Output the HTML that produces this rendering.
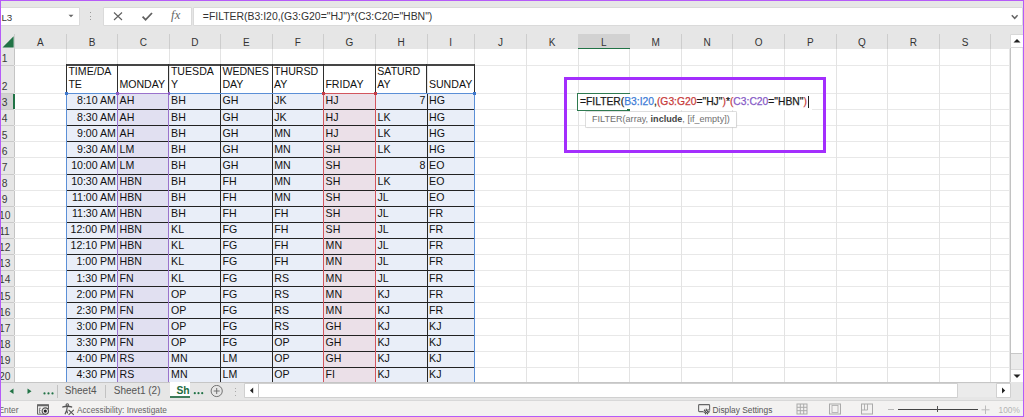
<!DOCTYPE html>
<html><head><meta charset="utf-8">
<style>
html,body{margin:0;padding:0}
body{width:1024px;height:417px;position:relative;overflow:hidden;background:#e6e6e6;font-family:"Liberation Sans",sans-serif;}
.a{position:absolute}
.t{position:absolute;white-space:nowrap;line-height:1}
</style></head><body>
<div class="a" style="left:1px;top:7.5px;width:77.5px;height:17.6px;background:#fff;box-shadow:0 0 0 0.6px #d2d2d2"></div>
<div class="t" style="left:1.4px;top:12.9px;font-size:9.8px;color:#3a3a3a">L3</div>
<svg class="a" style="left:68px;top:14px" width="6" height="4"><path d="M0.5 0.8 L5.5 0.8 L3 3.3 Z" fill="#666"/></svg>
<div class="a" style="left:90px;top:12px;width:1.2px;height:1.2px;background:#9a9a9a"></div>
<div class="a" style="left:90px;top:15.5px;width:1.2px;height:1.2px;background:#9a9a9a"></div>
<div class="a" style="left:90px;top:19px;width:1.2px;height:1.2px;background:#9a9a9a"></div>
<div class="a" style="left:103.6px;top:7.6px;width:87.5px;height:17.8px;background:#fff;box-shadow:0 0 0 0.6px #d2d2d2"></div>
<svg class="a" style="left:110px;top:9px" width="80" height="15"><path d="M4 3.5 L12 11 M12 3.5 L4 11" stroke="#606060" stroke-width="1.15" fill="none"/><path d="M32.6 7.6 L35.6 10.8 L42 4" stroke="#606060" stroke-width="1.8" fill="none"/></svg>
<div class="t" style="left:171px;top:9.4px;font-family:'Liberation Serif',serif;font-size:12.6px;color:#666;letter-spacing:0.3px"><i>fx</i></div>
<div class="a" style="left:193.6px;top:7.6px;width:828px;height:17.8px;background:#fff;box-shadow:0 0 0 0.6px #d2d2d2"></div>
<div class="t" style="left:202.8px;top:12.0px;font-size:10.45px;color:#333">=FILTER(B3:I20,(G3:G20="HJ")*(C3:C20="HBN")</div>
<svg class="a" style="left:1010px;top:14px" width="10" height="6"><path d="M1.8 1.3 L4.7 4.3 L7.6 1.3" stroke="#666" stroke-width="1.5" fill="none"/></svg>
<div class="a" style="left:14.3px;top:48.9px;width:995.2px;height:1.2px;background:#cccccc"></div>
<div class="a" style="left:13.8px;top:34px;width:0.8px;height:15px;background:#cdcdcd"></div>
<div class="a" style="left:66.0px;top:34px;width:0.8px;height:15px;background:#cdcdcd"></div>
<div class="a" style="left:117.0px;top:34px;width:0.8px;height:15px;background:#cdcdcd"></div>
<div class="a" style="left:168.5px;top:34px;width:0.8px;height:15px;background:#cdcdcd"></div>
<div class="a" style="left:220.0px;top:34px;width:0.8px;height:15px;background:#cdcdcd"></div>
<div class="a" style="left:271.7px;top:34px;width:0.8px;height:15px;background:#cdcdcd"></div>
<div class="a" style="left:323.0px;top:34px;width:0.8px;height:15px;background:#cdcdcd"></div>
<div class="a" style="left:374.9px;top:34px;width:0.8px;height:15px;background:#cdcdcd"></div>
<div class="a" style="left:426.5px;top:34px;width:0.8px;height:15px;background:#cdcdcd"></div>
<div class="a" style="left:474.0px;top:34px;width:0.8px;height:15px;background:#cdcdcd"></div>
<div class="a" style="left:525.8px;top:34px;width:0.8px;height:15px;background:#cdcdcd"></div>
<div class="a" style="left:577.5px;top:34px;width:0.8px;height:15px;background:#cdcdcd"></div>
<div class="a" style="left:629.3px;top:34px;width:0.8px;height:15px;background:#cdcdcd"></div>
<div class="a" style="left:680.8px;top:34px;width:0.8px;height:15px;background:#cdcdcd"></div>
<div class="a" style="left:732.2px;top:34px;width:0.8px;height:15px;background:#cdcdcd"></div>
<div class="a" style="left:783.9px;top:34px;width:0.8px;height:15px;background:#cdcdcd"></div>
<div class="a" style="left:835.8px;top:34px;width:0.8px;height:15px;background:#cdcdcd"></div>
<div class="a" style="left:887.0px;top:34px;width:0.8px;height:15px;background:#cdcdcd"></div>
<div class="a" style="left:938.9px;top:34px;width:0.8px;height:15px;background:#cdcdcd"></div>
<div class="a" style="left:990.2px;top:34px;width:0.8px;height:15px;background:#cdcdcd"></div>
<div class="a" style="left:578px;top:34px;width:51.799999999999955px;height:14.2px;background:#d2d2d2"></div>
<div class="a" style="left:578px;top:48px;width:51.799999999999955px;height:1.6px;background:#217346"></div>
<div class="t" style="left:14.3px;top:37.9px;width:52.2px;text-align:center;font-size:10px;color:#333">A</div>
<div class="t" style="left:66.5px;top:37.9px;width:51.0px;text-align:center;font-size:10px;color:#333">B</div>
<div class="t" style="left:117.5px;top:37.9px;width:51.5px;text-align:center;font-size:10px;color:#333">C</div>
<div class="t" style="left:169px;top:37.9px;width:51.5px;text-align:center;font-size:10px;color:#333">D</div>
<div class="t" style="left:220.5px;top:37.9px;width:51.69999999999999px;text-align:center;font-size:10px;color:#333">E</div>
<div class="t" style="left:272.2px;top:37.9px;width:51.30000000000001px;text-align:center;font-size:10px;color:#333">F</div>
<div class="t" style="left:323.5px;top:37.9px;width:51.89999999999998px;text-align:center;font-size:10px;color:#333">G</div>
<div class="t" style="left:375.4px;top:37.9px;width:51.60000000000002px;text-align:center;font-size:10px;color:#333">H</div>
<div class="t" style="left:427px;top:37.9px;width:47.5px;text-align:center;font-size:10px;color:#333">I</div>
<div class="t" style="left:474.5px;top:37.9px;width:51.799999999999955px;text-align:center;font-size:10px;color:#333">J</div>
<div class="t" style="left:526.3px;top:37.9px;width:51.700000000000045px;text-align:center;font-size:10px;color:#333">K</div>
<div class="t" style="left:578px;top:37.9px;width:51.799999999999955px;text-align:center;font-size:10px;color:#333">L</div>
<div class="t" style="left:629.8px;top:37.9px;width:51.5px;text-align:center;font-size:10px;color:#333">M</div>
<div class="t" style="left:681.3px;top:37.9px;width:51.40000000000009px;text-align:center;font-size:10px;color:#333">N</div>
<div class="t" style="left:732.7px;top:37.9px;width:51.69999999999993px;text-align:center;font-size:10px;color:#333">O</div>
<div class="t" style="left:784.4px;top:37.9px;width:51.89999999999998px;text-align:center;font-size:10px;color:#333">P</div>
<div class="t" style="left:836.3px;top:37.9px;width:51.200000000000045px;text-align:center;font-size:10px;color:#333">Q</div>
<div class="t" style="left:887.5px;top:37.9px;width:51.89999999999998px;text-align:center;font-size:10px;color:#333">R</div>
<div class="t" style="left:939.4px;top:37.9px;width:51.30000000000007px;text-align:center;font-size:10px;color:#333">S</div>
<svg class="a" style="left:1px;top:34px" width="14" height="15"><path d="M1.5 13.5 L12.6 2.2 L12.6 13.5 Z" fill="#217346"/></svg>
<div class="a" style="left:14.3px;top:49.4px;width:995.2px;height:332.20000000000005px;background:#fff"></div>
<div class="a" style="left:1px;top:49.4px;width:13.3px;height:332.20000000000005px;background:#e6e6e6"></div>
<div class="a" style="left:14px;top:49.4px;width:0.9px;height:332.20000000000005px;background:#c4c4c4"></div>
<div class="a" style="left:1px;top:93.5px;width:12.5px;height:16.099999999999994px;background:#d2d2d2"></div>
<div class="a" style="left:13px;top:93.5px;width:1.6px;height:16.099999999999994px;background:#217346"></div>
<div class="a" style="left:14.3px;top:64.5px;width:995.2px;height:0.9px;background:#e8e8e8"></div>
<div class="a" style="left:1px;top:64.5px;width:13px;height:0.9px;background:#cacaca"></div>
<div class="a" style="left:14.3px;top:93.0px;width:995.2px;height:0.9px;background:#e8e8e8"></div>
<div class="a" style="left:1px;top:93.0px;width:13px;height:0.9px;background:#cacaca"></div>
<div class="a" style="left:14.3px;top:109.1px;width:995.2px;height:0.9px;background:#e8e8e8"></div>
<div class="a" style="left:1px;top:109.1px;width:13px;height:0.9px;background:#cacaca"></div>
<div class="a" style="left:14.3px;top:125.2px;width:995.2px;height:0.9px;background:#e8e8e8"></div>
<div class="a" style="left:1px;top:125.2px;width:13px;height:0.9px;background:#cacaca"></div>
<div class="a" style="left:14.3px;top:141.3px;width:995.2px;height:0.9px;background:#e8e8e8"></div>
<div class="a" style="left:1px;top:141.3px;width:13px;height:0.9px;background:#cacaca"></div>
<div class="a" style="left:14.3px;top:157.4px;width:995.2px;height:0.9px;background:#e8e8e8"></div>
<div class="a" style="left:1px;top:157.4px;width:13px;height:0.9px;background:#cacaca"></div>
<div class="a" style="left:14.3px;top:173.5px;width:995.2px;height:0.9px;background:#e8e8e8"></div>
<div class="a" style="left:1px;top:173.5px;width:13px;height:0.9px;background:#cacaca"></div>
<div class="a" style="left:14.3px;top:189.60000000000002px;width:995.2px;height:0.9px;background:#e8e8e8"></div>
<div class="a" style="left:1px;top:189.60000000000002px;width:13px;height:0.9px;background:#cacaca"></div>
<div class="a" style="left:14.3px;top:205.70000000000002px;width:995.2px;height:0.9px;background:#e8e8e8"></div>
<div class="a" style="left:1px;top:205.70000000000002px;width:13px;height:0.9px;background:#cacaca"></div>
<div class="a" style="left:14.3px;top:221.8px;width:995.2px;height:0.9px;background:#e8e8e8"></div>
<div class="a" style="left:1px;top:221.8px;width:13px;height:0.9px;background:#cacaca"></div>
<div class="a" style="left:14.3px;top:237.9px;width:995.2px;height:0.9px;background:#e8e8e8"></div>
<div class="a" style="left:1px;top:237.9px;width:13px;height:0.9px;background:#cacaca"></div>
<div class="a" style="left:14.3px;top:254.0px;width:995.2px;height:0.9px;background:#e8e8e8"></div>
<div class="a" style="left:1px;top:254.0px;width:13px;height:0.9px;background:#cacaca"></div>
<div class="a" style="left:14.3px;top:270.1px;width:995.2px;height:0.9px;background:#e8e8e8"></div>
<div class="a" style="left:1px;top:270.1px;width:13px;height:0.9px;background:#cacaca"></div>
<div class="a" style="left:14.3px;top:286.20000000000005px;width:995.2px;height:0.9px;background:#e8e8e8"></div>
<div class="a" style="left:1px;top:286.20000000000005px;width:13px;height:0.9px;background:#cacaca"></div>
<div class="a" style="left:14.3px;top:302.3px;width:995.2px;height:0.9px;background:#e8e8e8"></div>
<div class="a" style="left:1px;top:302.3px;width:13px;height:0.9px;background:#cacaca"></div>
<div class="a" style="left:14.3px;top:318.40000000000003px;width:995.2px;height:0.9px;background:#e8e8e8"></div>
<div class="a" style="left:1px;top:318.40000000000003px;width:13px;height:0.9px;background:#cacaca"></div>
<div class="a" style="left:14.3px;top:334.5px;width:995.2px;height:0.9px;background:#e8e8e8"></div>
<div class="a" style="left:1px;top:334.5px;width:13px;height:0.9px;background:#cacaca"></div>
<div class="a" style="left:14.3px;top:350.6px;width:995.2px;height:0.9px;background:#e8e8e8"></div>
<div class="a" style="left:1px;top:350.6px;width:13px;height:0.9px;background:#cacaca"></div>
<div class="a" style="left:14.3px;top:366.70000000000005px;width:995.2px;height:0.9px;background:#e8e8e8"></div>
<div class="a" style="left:1px;top:366.70000000000005px;width:13px;height:0.9px;background:#cacaca"></div>
<div class="a" style="left:14.3px;top:382.8px;width:995.2px;height:0.9px;background:#e8e8e8"></div>
<div class="a" style="left:1px;top:382.8px;width:13px;height:0.9px;background:#cacaca"></div>
<div class="a" style="left:66.1px;top:49.4px;width:0.9px;height:332.20000000000005px;background:#e3e3e3"></div>
<div class="a" style="left:117.1px;top:49.4px;width:0.9px;height:332.20000000000005px;background:#e3e3e3"></div>
<div class="a" style="left:168.6px;top:49.4px;width:0.9px;height:332.20000000000005px;background:#e3e3e3"></div>
<div class="a" style="left:220.1px;top:49.4px;width:0.9px;height:332.20000000000005px;background:#e3e3e3"></div>
<div class="a" style="left:271.8px;top:49.4px;width:0.9px;height:332.20000000000005px;background:#e3e3e3"></div>
<div class="a" style="left:323.1px;top:49.4px;width:0.9px;height:332.20000000000005px;background:#e3e3e3"></div>
<div class="a" style="left:375.0px;top:49.4px;width:0.9px;height:332.20000000000005px;background:#e3e3e3"></div>
<div class="a" style="left:426.6px;top:49.4px;width:0.9px;height:332.20000000000005px;background:#e3e3e3"></div>
<div class="a" style="left:474.1px;top:49.4px;width:0.9px;height:332.20000000000005px;background:#e3e3e3"></div>
<div class="a" style="left:525.9px;top:49.4px;width:0.9px;height:332.20000000000005px;background:#e3e3e3"></div>
<div class="a" style="left:577.6px;top:49.4px;width:0.9px;height:332.20000000000005px;background:#e3e3e3"></div>
<div class="a" style="left:629.4px;top:49.4px;width:0.9px;height:332.20000000000005px;background:#e3e3e3"></div>
<div class="a" style="left:680.9px;top:49.4px;width:0.9px;height:332.20000000000005px;background:#e3e3e3"></div>
<div class="a" style="left:732.3000000000001px;top:49.4px;width:0.9px;height:332.20000000000005px;background:#e3e3e3"></div>
<div class="a" style="left:784.0px;top:49.4px;width:0.9px;height:332.20000000000005px;background:#e3e3e3"></div>
<div class="a" style="left:835.9px;top:49.4px;width:0.9px;height:332.20000000000005px;background:#e3e3e3"></div>
<div class="a" style="left:887.1px;top:49.4px;width:0.9px;height:332.20000000000005px;background:#e3e3e3"></div>
<div class="a" style="left:939.0px;top:49.4px;width:0.9px;height:332.20000000000005px;background:#e3e3e3"></div>
<div class="a" style="left:990.3000000000001px;top:49.4px;width:0.9px;height:332.20000000000005px;background:#e3e3e3"></div>
<div class="t" style="left:-1px;top:53.70px;width:11px;text-align:center;font-size:10.3px;color:#3a3a3a">1</div>
<div class="t" style="left:-1px;top:82.20px;width:11px;text-align:center;font-size:10.3px;color:#3a3a3a">2</div>
<div class="t" style="left:-1px;top:98.30px;width:11px;text-align:center;font-size:10.3px;color:#3a3a3a">3</div>
<div class="t" style="left:-1px;top:114.40px;width:11px;text-align:center;font-size:10.3px;color:#3a3a3a">4</div>
<div class="t" style="left:-1px;top:130.50px;width:11px;text-align:center;font-size:10.3px;color:#3a3a3a">5</div>
<div class="t" style="left:-1px;top:146.60px;width:11px;text-align:center;font-size:10.3px;color:#3a3a3a">6</div>
<div class="t" style="left:-1px;top:162.70px;width:11px;text-align:center;font-size:10.3px;color:#3a3a3a">7</div>
<div class="t" style="left:-1px;top:178.80px;width:11px;text-align:center;font-size:10.3px;color:#3a3a3a">8</div>
<div class="t" style="left:-1px;top:194.90px;width:11px;text-align:center;font-size:10.3px;color:#3a3a3a">9</div>
<div class="t" style="left:-1px;top:211.00px;width:11px;text-align:center;font-size:10.3px;color:#3a3a3a">10</div>
<div class="t" style="left:-1px;top:227.10px;width:11px;text-align:center;font-size:10.3px;color:#3a3a3a">11</div>
<div class="t" style="left:-1px;top:243.20px;width:11px;text-align:center;font-size:10.3px;color:#3a3a3a">12</div>
<div class="t" style="left:-1px;top:259.30px;width:11px;text-align:center;font-size:10.3px;color:#3a3a3a">13</div>
<div class="t" style="left:-1px;top:275.40px;width:11px;text-align:center;font-size:10.3px;color:#3a3a3a">14</div>
<div class="t" style="left:-1px;top:291.50px;width:11px;text-align:center;font-size:10.3px;color:#3a3a3a">15</div>
<div class="t" style="left:-1px;top:307.60px;width:11px;text-align:center;font-size:10.3px;color:#3a3a3a">16</div>
<div class="t" style="left:-1px;top:323.70px;width:11px;text-align:center;font-size:10.3px;color:#3a3a3a">17</div>
<div class="t" style="left:-1px;top:339.80px;width:11px;text-align:center;font-size:10.3px;color:#3a3a3a">18</div>
<div class="t" style="left:-1px;top:355.90px;width:11px;text-align:center;font-size:10.3px;color:#3a3a3a">19</div>
<div class="t" style="left:-1px;top:372.00px;width:11px;text-align:center;font-size:10.3px;color:#3a3a3a">20</div>
<div class="a" style="left:66px;top:64px;width:409px;height:2px;background:#454545"></div>
<div class="a" style="left:66px;top:64px;width:1px;height:30px;background:#2e2e2e"></div>
<div class="a" style="left:117px;top:64px;width:1px;height:30px;background:#2e2e2e"></div>
<div class="a" style="left:168px;top:64px;width:1px;height:30px;background:#2e2e2e"></div>
<div class="a" style="left:220px;top:64px;width:1px;height:30px;background:#2e2e2e"></div>
<div class="a" style="left:272px;top:64px;width:1px;height:30px;background:#2e2e2e"></div>
<div class="a" style="left:323px;top:64px;width:1px;height:30px;background:#2e2e2e"></div>
<div class="a" style="left:375px;top:64px;width:1px;height:30px;background:#2e2e2e"></div>
<div class="a" style="left:426px;top:64px;width:1px;height:30px;background:#2e2e2e"></div>
<div class="a" style="left:474px;top:64px;width:1px;height:30px;background:#2e2e2e"></div>
<div class="t" style="left:68.4px;top:66.0px;font-size:10.6px;color:#111">TIME/DA</div>
<div class="t" style="left:68.4px;top:78.9px;font-size:10.6px;color:#111">TE</div>
<div class="t" style="left:119.4px;top:78.9px;font-size:10.6px;color:#111">MONDAY</div>
<div class="t" style="left:170.9px;top:66.0px;font-size:10.6px;color:#111">TUESDA</div>
<div class="t" style="left:170.9px;top:78.9px;font-size:10.6px;color:#111">Y</div>
<div class="t" style="left:222.4px;top:66.0px;font-size:10.6px;color:#111">WEDNES</div>
<div class="t" style="left:222.4px;top:78.9px;font-size:10.6px;color:#111">DAY</div>
<div class="t" style="left:274.09999999999997px;top:66.0px;font-size:10.6px;color:#111">THURSD</div>
<div class="t" style="left:274.09999999999997px;top:78.9px;font-size:10.6px;color:#111">AY</div>
<div class="t" style="left:325.4px;top:78.9px;font-size:10.6px;color:#111">FRIDAY</div>
<div class="t" style="left:377.29999999999995px;top:66.0px;font-size:10.6px;color:#111">SATURD</div>
<div class="t" style="left:377.29999999999995px;top:78.9px;font-size:10.6px;color:#111">AY</div>
<div class="t" style="left:428.9px;top:78.9px;font-size:10.6px;color:#111">SUNDAY</div>
<div class="a" style="left:66.3px;top:93.5px;width:408.4px;height:288.1px;background:#e9eef8"></div>
<div class="a" style="left:117.5px;top:93.5px;width:51.5px;height:288.1px;background:#e1e0f1"></div>
<div class="a" style="left:323.5px;top:93.5px;width:51.89999999999998px;height:288.1px;background:#ebe0e8"></div>
<div class="a" style="left:66px;top:109px;width:409px;height:1px;background:#222"></div>
<div class="a" style="left:66px;top:125px;width:409px;height:1px;background:#222"></div>
<div class="a" style="left:66px;top:141px;width:409px;height:1px;background:#222"></div>
<div class="a" style="left:66px;top:157px;width:409px;height:1px;background:#222"></div>
<div class="a" style="left:66px;top:174px;width:409px;height:1px;background:#222"></div>
<div class="a" style="left:66px;top:190px;width:409px;height:1px;background:#222"></div>
<div class="a" style="left:66px;top:206px;width:409px;height:1px;background:#222"></div>
<div class="a" style="left:66px;top:222px;width:409px;height:1px;background:#222"></div>
<div class="a" style="left:66px;top:238px;width:409px;height:1px;background:#222"></div>
<div class="a" style="left:66px;top:254px;width:409px;height:1px;background:#222"></div>
<div class="a" style="left:66px;top:270px;width:409px;height:1px;background:#222"></div>
<div class="a" style="left:66px;top:286px;width:409px;height:1px;background:#222"></div>
<div class="a" style="left:66px;top:302px;width:409px;height:1px;background:#222"></div>
<div class="a" style="left:66px;top:318px;width:409px;height:1px;background:#222"></div>
<div class="a" style="left:66px;top:335px;width:409px;height:1px;background:#222"></div>
<div class="a" style="left:66px;top:351px;width:409px;height:1px;background:#222"></div>
<div class="a" style="left:66px;top:367px;width:409px;height:1px;background:#222"></div>
<div class="a" style="left:66px;top:383px;width:409px;height:1px;background:#222"></div>
<div class="a" style="left:220.0px;top:93.5px;width:1.2px;height:288.1px;background:#262626"></div>
<div class="a" style="left:271.7px;top:93.5px;width:1.2px;height:288.1px;background:#262626"></div>
<div class="a" style="left:426.5px;top:93.5px;width:1.2px;height:288.1px;background:#262626"></div>
<div class="t" style="left:66.5px;top:95.40px;width:49.40px;text-align:right;font-size:10.6px;color:#111">8:10 AM</div>
<div class="t" style="left:119.6px;top:95.4px;font-size:10.6px;color:#111">AH</div>
<div class="t" style="left:171.1px;top:95.4px;font-size:10.6px;color:#111">BH</div>
<div class="t" style="left:222.6px;top:95.4px;font-size:10.6px;color:#111">GH</div>
<div class="t" style="left:274.3px;top:95.4px;font-size:10.6px;color:#111">JK</div>
<div class="t" style="left:325.6px;top:95.4px;font-size:10.6px;color:#111">HJ</div>
<div class="t" style="left:375.4px;top:95.40px;width:50.00px;text-align:right;font-size:10.6px;color:#111">7</div>
<div class="t" style="left:429.1px;top:95.4px;font-size:10.6px;color:#111">HG</div>
<div class="t" style="left:66.5px;top:111.50px;width:49.40px;text-align:right;font-size:10.6px;color:#111">8:30 AM</div>
<div class="t" style="left:119.6px;top:111.5px;font-size:10.6px;color:#111">AH</div>
<div class="t" style="left:171.1px;top:111.5px;font-size:10.6px;color:#111">BH</div>
<div class="t" style="left:222.6px;top:111.5px;font-size:10.6px;color:#111">GH</div>
<div class="t" style="left:274.3px;top:111.5px;font-size:10.6px;color:#111">JK</div>
<div class="t" style="left:325.6px;top:111.5px;font-size:10.6px;color:#111">HJ</div>
<div class="t" style="left:377.5px;top:111.5px;font-size:10.6px;color:#111">LK</div>
<div class="t" style="left:429.1px;top:111.5px;font-size:10.6px;color:#111">HG</div>
<div class="t" style="left:66.5px;top:127.60px;width:49.40px;text-align:right;font-size:10.6px;color:#111">9:00 AM</div>
<div class="t" style="left:119.6px;top:127.6px;font-size:10.6px;color:#111">AH</div>
<div class="t" style="left:171.1px;top:127.6px;font-size:10.6px;color:#111">BH</div>
<div class="t" style="left:222.6px;top:127.6px;font-size:10.6px;color:#111">GH</div>
<div class="t" style="left:274.3px;top:127.6px;font-size:10.6px;color:#111">MN</div>
<div class="t" style="left:325.6px;top:127.6px;font-size:10.6px;color:#111">HJ</div>
<div class="t" style="left:377.5px;top:127.6px;font-size:10.6px;color:#111">LK</div>
<div class="t" style="left:429.1px;top:127.6px;font-size:10.6px;color:#111">HG</div>
<div class="t" style="left:66.5px;top:143.70px;width:49.40px;text-align:right;font-size:10.6px;color:#111">9:30 AM</div>
<div class="t" style="left:119.6px;top:143.7px;font-size:10.6px;color:#111">LM</div>
<div class="t" style="left:171.1px;top:143.7px;font-size:10.6px;color:#111">BH</div>
<div class="t" style="left:222.6px;top:143.7px;font-size:10.6px;color:#111">GH</div>
<div class="t" style="left:274.3px;top:143.7px;font-size:10.6px;color:#111">MN</div>
<div class="t" style="left:325.6px;top:143.7px;font-size:10.6px;color:#111">SH</div>
<div class="t" style="left:377.5px;top:143.7px;font-size:10.6px;color:#111">LK</div>
<div class="t" style="left:429.1px;top:143.7px;font-size:10.6px;color:#111">HG</div>
<div class="t" style="left:66.5px;top:159.80px;width:49.40px;text-align:right;font-size:10.6px;color:#111">10:00 AM</div>
<div class="t" style="left:119.6px;top:159.8px;font-size:10.6px;color:#111">LM</div>
<div class="t" style="left:171.1px;top:159.8px;font-size:10.6px;color:#111">BH</div>
<div class="t" style="left:222.6px;top:159.8px;font-size:10.6px;color:#111">GH</div>
<div class="t" style="left:274.3px;top:159.8px;font-size:10.6px;color:#111">MN</div>
<div class="t" style="left:325.6px;top:159.8px;font-size:10.6px;color:#111">SH</div>
<div class="t" style="left:375.4px;top:159.80px;width:50.00px;text-align:right;font-size:10.6px;color:#111">8</div>
<div class="t" style="left:429.1px;top:159.8px;font-size:10.6px;color:#111">EO</div>
<div class="t" style="left:66.5px;top:175.90px;width:49.40px;text-align:right;font-size:10.6px;color:#111">10:30 AM</div>
<div class="t" style="left:119.6px;top:175.9px;font-size:10.6px;color:#111">HBN</div>
<div class="t" style="left:171.1px;top:175.9px;font-size:10.6px;color:#111">BH</div>
<div class="t" style="left:222.6px;top:175.9px;font-size:10.6px;color:#111">FH</div>
<div class="t" style="left:274.3px;top:175.9px;font-size:10.6px;color:#111">MN</div>
<div class="t" style="left:325.6px;top:175.9px;font-size:10.6px;color:#111">SH</div>
<div class="t" style="left:377.5px;top:175.9px;font-size:10.6px;color:#111">LK</div>
<div class="t" style="left:429.1px;top:175.9px;font-size:10.6px;color:#111">EO</div>
<div class="t" style="left:66.5px;top:192.00px;width:49.40px;text-align:right;font-size:10.6px;color:#111">11:00 AM</div>
<div class="t" style="left:119.6px;top:192.0px;font-size:10.6px;color:#111">HBN</div>
<div class="t" style="left:171.1px;top:192.0px;font-size:10.6px;color:#111">BH</div>
<div class="t" style="left:222.6px;top:192.0px;font-size:10.6px;color:#111">FH</div>
<div class="t" style="left:274.3px;top:192.0px;font-size:10.6px;color:#111">MN</div>
<div class="t" style="left:325.6px;top:192.0px;font-size:10.6px;color:#111">SH</div>
<div class="t" style="left:377.5px;top:192.0px;font-size:10.6px;color:#111">JL</div>
<div class="t" style="left:429.1px;top:192.0px;font-size:10.6px;color:#111">EO</div>
<div class="t" style="left:66.5px;top:208.10px;width:49.40px;text-align:right;font-size:10.6px;color:#111">11:30 AM</div>
<div class="t" style="left:119.6px;top:208.1px;font-size:10.6px;color:#111">HBN</div>
<div class="t" style="left:171.1px;top:208.1px;font-size:10.6px;color:#111">BH</div>
<div class="t" style="left:222.6px;top:208.1px;font-size:10.6px;color:#111">FH</div>
<div class="t" style="left:274.3px;top:208.1px;font-size:10.6px;color:#111">FH</div>
<div class="t" style="left:325.6px;top:208.1px;font-size:10.6px;color:#111">SH</div>
<div class="t" style="left:377.5px;top:208.1px;font-size:10.6px;color:#111">JL</div>
<div class="t" style="left:429.1px;top:208.1px;font-size:10.6px;color:#111">FR</div>
<div class="t" style="left:66.5px;top:224.20px;width:49.40px;text-align:right;font-size:10.6px;color:#111">12:00 PM</div>
<div class="t" style="left:119.6px;top:224.2px;font-size:10.6px;color:#111">HBN</div>
<div class="t" style="left:171.1px;top:224.2px;font-size:10.6px;color:#111">KL</div>
<div class="t" style="left:222.6px;top:224.2px;font-size:10.6px;color:#111">FG</div>
<div class="t" style="left:274.3px;top:224.2px;font-size:10.6px;color:#111">FH</div>
<div class="t" style="left:325.6px;top:224.2px;font-size:10.6px;color:#111">SH</div>
<div class="t" style="left:377.5px;top:224.2px;font-size:10.6px;color:#111">JL</div>
<div class="t" style="left:429.1px;top:224.2px;font-size:10.6px;color:#111">FR</div>
<div class="t" style="left:66.5px;top:240.30px;width:49.40px;text-align:right;font-size:10.6px;color:#111">12:10 PM</div>
<div class="t" style="left:119.6px;top:240.3px;font-size:10.6px;color:#111">HBN</div>
<div class="t" style="left:171.1px;top:240.3px;font-size:10.6px;color:#111">KL</div>
<div class="t" style="left:222.6px;top:240.3px;font-size:10.6px;color:#111">FG</div>
<div class="t" style="left:274.3px;top:240.3px;font-size:10.6px;color:#111">FH</div>
<div class="t" style="left:325.6px;top:240.3px;font-size:10.6px;color:#111">MN</div>
<div class="t" style="left:377.5px;top:240.3px;font-size:10.6px;color:#111">JL</div>
<div class="t" style="left:429.1px;top:240.3px;font-size:10.6px;color:#111">FR</div>
<div class="t" style="left:66.5px;top:256.40px;width:49.40px;text-align:right;font-size:10.6px;color:#111">1:00 PM</div>
<div class="t" style="left:119.6px;top:256.4px;font-size:10.6px;color:#111">HBN</div>
<div class="t" style="left:171.1px;top:256.4px;font-size:10.6px;color:#111">KL</div>
<div class="t" style="left:222.6px;top:256.4px;font-size:10.6px;color:#111">FG</div>
<div class="t" style="left:274.3px;top:256.4px;font-size:10.6px;color:#111">FH</div>
<div class="t" style="left:325.6px;top:256.4px;font-size:10.6px;color:#111">MN</div>
<div class="t" style="left:377.5px;top:256.4px;font-size:10.6px;color:#111">JL</div>
<div class="t" style="left:429.1px;top:256.4px;font-size:10.6px;color:#111">FR</div>
<div class="t" style="left:66.5px;top:272.50px;width:49.40px;text-align:right;font-size:10.6px;color:#111">1:30 PM</div>
<div class="t" style="left:119.6px;top:272.5px;font-size:10.6px;color:#111">FN</div>
<div class="t" style="left:171.1px;top:272.5px;font-size:10.6px;color:#111">KL</div>
<div class="t" style="left:222.6px;top:272.5px;font-size:10.6px;color:#111">FG</div>
<div class="t" style="left:274.3px;top:272.5px;font-size:10.6px;color:#111">RS</div>
<div class="t" style="left:325.6px;top:272.5px;font-size:10.6px;color:#111">MN</div>
<div class="t" style="left:377.5px;top:272.5px;font-size:10.6px;color:#111">JL</div>
<div class="t" style="left:429.1px;top:272.5px;font-size:10.6px;color:#111">FR</div>
<div class="t" style="left:66.5px;top:288.60px;width:49.40px;text-align:right;font-size:10.6px;color:#111">2:00 PM</div>
<div class="t" style="left:119.6px;top:288.6px;font-size:10.6px;color:#111">FN</div>
<div class="t" style="left:171.1px;top:288.6px;font-size:10.6px;color:#111">OP</div>
<div class="t" style="left:222.6px;top:288.6px;font-size:10.6px;color:#111">FG</div>
<div class="t" style="left:274.3px;top:288.6px;font-size:10.6px;color:#111">RS</div>
<div class="t" style="left:325.6px;top:288.6px;font-size:10.6px;color:#111">MN</div>
<div class="t" style="left:377.5px;top:288.6px;font-size:10.6px;color:#111">KJ</div>
<div class="t" style="left:429.1px;top:288.6px;font-size:10.6px;color:#111">FR</div>
<div class="t" style="left:66.5px;top:304.70px;width:49.40px;text-align:right;font-size:10.6px;color:#111">2:30 PM</div>
<div class="t" style="left:119.6px;top:304.7px;font-size:10.6px;color:#111">FN</div>
<div class="t" style="left:171.1px;top:304.7px;font-size:10.6px;color:#111">OP</div>
<div class="t" style="left:222.6px;top:304.7px;font-size:10.6px;color:#111">FG</div>
<div class="t" style="left:274.3px;top:304.7px;font-size:10.6px;color:#111">RS</div>
<div class="t" style="left:325.6px;top:304.7px;font-size:10.6px;color:#111">MN</div>
<div class="t" style="left:377.5px;top:304.7px;font-size:10.6px;color:#111">KJ</div>
<div class="t" style="left:429.1px;top:304.7px;font-size:10.6px;color:#111">FR</div>
<div class="t" style="left:66.5px;top:320.80px;width:49.40px;text-align:right;font-size:10.6px;color:#111">3:00 PM</div>
<div class="t" style="left:119.6px;top:320.8px;font-size:10.6px;color:#111">FN</div>
<div class="t" style="left:171.1px;top:320.8px;font-size:10.6px;color:#111">OP</div>
<div class="t" style="left:222.6px;top:320.8px;font-size:10.6px;color:#111">FG</div>
<div class="t" style="left:274.3px;top:320.8px;font-size:10.6px;color:#111">RS</div>
<div class="t" style="left:325.6px;top:320.8px;font-size:10.6px;color:#111">GH</div>
<div class="t" style="left:377.5px;top:320.8px;font-size:10.6px;color:#111">KJ</div>
<div class="t" style="left:429.1px;top:320.8px;font-size:10.6px;color:#111">KJ</div>
<div class="t" style="left:66.5px;top:336.90px;width:49.40px;text-align:right;font-size:10.6px;color:#111">3:30 PM</div>
<div class="t" style="left:119.6px;top:336.9px;font-size:10.6px;color:#111">FN</div>
<div class="t" style="left:171.1px;top:336.9px;font-size:10.6px;color:#111">OP</div>
<div class="t" style="left:222.6px;top:336.9px;font-size:10.6px;color:#111">FG</div>
<div class="t" style="left:274.3px;top:336.9px;font-size:10.6px;color:#111">OP</div>
<div class="t" style="left:325.6px;top:336.9px;font-size:10.6px;color:#111">GH</div>
<div class="t" style="left:377.5px;top:336.9px;font-size:10.6px;color:#111">KJ</div>
<div class="t" style="left:429.1px;top:336.9px;font-size:10.6px;color:#111">KJ</div>
<div class="t" style="left:66.5px;top:353.00px;width:49.40px;text-align:right;font-size:10.6px;color:#111">4:00 PM</div>
<div class="t" style="left:119.6px;top:353.0px;font-size:10.6px;color:#111">RS</div>
<div class="t" style="left:171.1px;top:353.0px;font-size:10.6px;color:#111">MN</div>
<div class="t" style="left:222.6px;top:353.0px;font-size:10.6px;color:#111">LM</div>
<div class="t" style="left:274.3px;top:353.0px;font-size:10.6px;color:#111">OP</div>
<div class="t" style="left:325.6px;top:353.0px;font-size:10.6px;color:#111">GH</div>
<div class="t" style="left:377.5px;top:353.0px;font-size:10.6px;color:#111">KJ</div>
<div class="t" style="left:429.1px;top:353.0px;font-size:10.6px;color:#111">KJ</div>
<div class="t" style="left:66.5px;top:369.10px;width:49.40px;text-align:right;font-size:10.6px;color:#111">4:30 PM</div>
<div class="t" style="left:119.6px;top:369.1px;font-size:10.6px;color:#111">RS</div>
<div class="t" style="left:171.1px;top:369.1px;font-size:10.6px;color:#111">MN</div>
<div class="t" style="left:222.6px;top:369.1px;font-size:10.6px;color:#111">LM</div>
<div class="t" style="left:274.3px;top:369.1px;font-size:10.6px;color:#111">OP</div>
<div class="t" style="left:325.6px;top:369.1px;font-size:10.6px;color:#111">FI</div>
<div class="t" style="left:377.5px;top:369.1px;font-size:10.6px;color:#111">KJ</div>
<div class="t" style="left:429.1px;top:369.1px;font-size:10.6px;color:#111">KJ</div>
<div class="a" style="left:66px;top:93px;width:409px;height:1px;background:#5b8fd6"></div>
<div class="a" style="left:66px;top:93px;width:1px;height:288.6px;background:#5b8fd6"></div>
<div class="a" style="left:474px;top:93px;width:1px;height:288.6px;background:#5b8fd6"></div>
<div class="a" style="left:64.89999999999999px;top:92.1px;width:2.8px;height:2.8px;background:#3f78cc"></div>
<div class="a" style="left:473.3px;top:92.1px;width:2.8px;height:2.8px;background:#3f78cc"></div>
<div class="a" style="left:117px;top:93px;width:53px;height:1px;background:#9a72cc"></div>
<div class="a" style="left:117px;top:93px;width:1px;height:288.6px;background:#9a72cc"></div>
<div class="a" style="left:168px;top:93px;width:1px;height:288.6px;background:#9a72cc"></div>
<div class="a" style="left:116.1px;top:92.1px;width:2.8px;height:2.8px;background:#8a5cc4"></div>
<div class="a" style="left:167.6px;top:92.1px;width:2.8px;height:2.8px;background:#8a5cc4"></div>
<div class="a" style="left:323px;top:93px;width:53px;height:1px;background:#d2555e"></div>
<div class="a" style="left:323px;top:93px;width:1px;height:288.6px;background:#d2555e"></div>
<div class="a" style="left:375px;top:93px;width:1px;height:288.6px;background:#d2555e"></div>
<div class="a" style="left:322.1px;top:92.1px;width:2.8px;height:2.8px;background:#c43d48"></div>
<div class="a" style="left:374.0px;top:92.1px;width:2.8px;height:2.8px;background:#c43d48"></div>
<div class="a" style="left:578px;top:93.8px;width:234px;height:16px;background:#fff"></div>
<div class="a" style="left:577.4px;top:93.3px;width:52.399999999999956px;height:1.1px;background:#2f7a50"></div>
<div class="a" style="left:577.4px;top:93.3px;width:1.1px;height:17.2px;background:#2f7a50"></div>
<div class="a" style="left:577.4px;top:109.89999999999999px;width:49.799999999999955px;height:1.1px;background:#2f7a50"></div>
<div class="a" style="left:627.1999999999999px;top:108.8px;width:3px;height:2.2px;background:#217346"></div>
<div class="t" style="left:580.2px;top:96.3px;font-size:11.2px;color:#1a1a1a;-webkit-text-stroke-width:0.25px;transform-origin:0 0;transform:scaleX(0.922)">=FILTER(<span style="color:#3c7bd6">B3:I20</span>,<span style="color:#c73b3b">(G3:G20</span>="HJ"<span style="color:#c73b3b">)</span>*<span style="color:#c73b3b">(</span><span style="color:#8659c6">C3:C20</span>="HBN"<span style="color:#c73b3b">)</span></div>
<div class="a" style="left:808.3px;top:96px;width:0.9px;height:12px;background:#222"></div>
<div class="a" style="left:586.3px;top:111.5px;width:150px;height:15.7px;background:#fff;box-shadow:0 0 0 0.7px #d0d0d0, 1px 1px 1px rgba(0,0,0,0.08)"></div>
<div class="t" style="left:591.6px;top:114.2px;font-size:9.6px;color:#707070;transform-origin:0 0;transform:scaleX(0.945)">FILTER(array, <b style="color:#444">include</b>, [if_empty])</div>
<div class="a" style="left:564.3px;top:76.7px;width:261.6px;height:75.89999999999999px;box-sizing:border-box;border:3px solid #a32efd"></div>
<div class="a" style="left:1009.5px;top:34.5px;width:13.0px;height:347.1px;background:#ebebeb"></div>
<div class="a" style="left:1009.5px;top:47.5px;width:1.3px;height:334.1px;background:#c2c2c2"></div>
<div class="a" style="left:1010.6px;top:34.5px;width:12px;height:12.7px;background:#fff;box-shadow:0 0 0 0.6px #cfcfcf"></div>
<svg class="a" style="left:1012px;top:37px" width="10" height="8"><path d="M1.5 5.5 L8.5 5.5 L5 2 Z" fill="#222"/></svg>
<div class="a" style="left:1010.8px;top:47.8px;width:11.7px;height:305.7px;background:#fff;border-bottom:0.9px solid #c8c8c8"></div>
<div class="a" style="left:1010.6px;top:369.6px;width:12px;height:12.1px;background:#fff;box-shadow:0 0 0 0.6px #cfcfcf"></div>
<svg class="a" style="left:1012px;top:372px" width="10" height="8"><path d="M1.5 2.5 L8.5 2.5 L5 6 Z" fill="#222"/></svg>
<div class="a" style="left:1px;top:381.6px;width:1022px;height:18.399999999999977px;background:#e6e6e6"></div>
<div class="a" style="left:1px;top:381.6px;width:1008.5px;height:0.9px;background:#c6c6c6"></div>
<svg class="a" style="left:6px;top:385px" width="50" height="12"><path d="M7.5 3.5 L3.5 6.2 L7.5 9 Z" fill="#217346"/><path d="M21.5 3.5 L25.5 6.2 L21.5 9 Z" fill="#217346"/><circle cx="38.5" cy="8.4" r="1.1" fill="#217346"/><circle cx="42.5" cy="8.4" r="1.1" fill="#217346"/><circle cx="46.5" cy="8.4" r="1.1" fill="#217346"/></svg>
<div class="a" style="left:57.2px;top:384.5px;width:0.9px;height:13px;background:#c2c2c2"></div>
<div class="t" style="left:64.8px;top:385.8px;font-size:10px;color:#555">Sheet4</div>
<div class="a" style="left:105.4px;top:384.5px;width:0.9px;height:13px;background:#c2c2c2"></div>
<div class="t" style="left:113.8px;top:385.8px;font-size:10px;color:#555">Sheet1 (2)</div>
<div class="a" style="left:170px;top:382.1px;width:19.8px;height:16px;background:#fff;overflow:hidden"></div>
<div class="a" style="left:170px;top:382px;width:19.8px;height:16px;overflow:hidden"><div class="t" style="left:6.5px;top:3.8px;font-size:10.3px;font-weight:bold;color:#1e6b40">Sheet5</div></div>
<div class="a" style="left:170px;top:396.4px;width:19.8px;height:1.4px;background:#3f7d5a"></div>
<svg class="a" style="left:192px;top:385px" width="40" height="13"><circle cx="2.8" cy="8.2" r="1.1" fill="#217346"/><circle cx="6.5" cy="8.2" r="1.1" fill="#217346"/><circle cx="10.2" cy="8.2" r="1.1" fill="#217346"/><circle cx="24.7" cy="6" r="5.6" stroke="#666" stroke-width="0.9" fill="none"/><path d="M24.7 3 L24.7 9 M21.7 6 L27.7 6" stroke="#666" stroke-width="0.9"/></svg>
<div class="a" style="left:234.5px;top:387.5px;width:1.1px;height:1.1px;background:#aaa"></div>
<div class="a" style="left:234.5px;top:391px;width:1.1px;height:1.1px;background:#aaa"></div>
<div class="a" style="left:234.5px;top:394.5px;width:1.1px;height:1.1px;background:#aaa"></div>
<div class="a" style="left:245.3px;top:384.2px;width:764px;height:13.2px;background:#ebebeb"></div>
<div class="a" style="left:245.3px;top:384.2px;width:711.3px;height:13.2px;background:#fff;box-shadow:0 0 0 0.7px #c6c6c6"></div>
<div class="a" style="left:258.4px;top:384.2px;width:0.8px;height:13.2px;background:#c6c6c6"></div>
<svg class="a" style="left:248px;top:386px" width="8" height="9"><path d="M5.2 1.5 L5.2 7.5 L2 4.5 Z" fill="#222"/></svg>
<div class="a" style="left:996.5px;top:384.2px;width:13px;height:13px;background:#fff;box-shadow:0 0 0 0.7px #c6c6c6"></div>
<svg class="a" style="left:999px;top:386px" width="8" height="9"><path d="M3 1.5 L3 7.5 L6.2 4.5 Z" fill="#222"/></svg>
<div class="a" style="left:1px;top:400px;width:1022px;height:15.5px;background:#f3f2f1"></div>
<div class="a" style="left:1px;top:399.8px;width:1022px;height:0.8px;background:#d8d8d8"></div>
<div class="t" style="left:-1.6px;top:406.0px;font-size:8.4px;color:#666">Enter</div>
<svg class="a" style="left:36px;top:403px" width="15" height="13"><path d="M1.5 11.2 L1.5 2 L12.5 2 L12.5 6" stroke="#666" stroke-width="1" fill="none"/><path d="M1.5 11.2 L8 11.2" stroke="#666" stroke-width="1" fill="none"/><path d="M1 2.3 L13 2.3" stroke="#666" stroke-width="2"/><path d="M4.8 5.2 L3.4 5.2 L3.4 10 L4.8 10 M3.4 7.6 L4.6 7.6" stroke="#777" stroke-width="0.9" fill="none"/><circle cx="9.3" cy="8.1" r="3.2" fill="#f3f2f1" stroke="#555" stroke-width="1.2"/><circle cx="9.3" cy="8.1" r="1.6" fill="#222"/></svg>
<svg class="a" style="left:61px;top:403px" width="15" height="13"><circle cx="6.3" cy="2" r="1.2" fill="none" stroke="#555" stroke-width="1.1"/><path d="M2 3.9 Q6.3 2.4 10.5 3.9" stroke="#555" stroke-width="1.5" stroke-linecap="round" fill="none"/><path d="M6.2 4 L5.7 7.2 L4 11.2 M5.7 7.2 L6.6 10.4" stroke="#555" stroke-width="1.2" fill="none"/><path d="M7.6 6.9 L12.8 11.8 M12.8 6.9 L7.6 11.8" stroke="#555" stroke-width="1.1"/></svg>
<div class="t" style="left:76.9px;top:406.0px;font-size:8.3px;color:#666">Accessibility: Investigate</div>
<svg class="a" style="left:697px;top:403px" width="15" height="13"><rect x="1.6" y="1.6" width="11" height="7" rx="0.8" fill="none" stroke="#666" stroke-width="1.1"/><circle cx="9.5" cy="8.6" r="3.1" fill="#f3f2f1"/><circle cx="9.5" cy="8.6" r="2.3" fill="none" stroke="#444" stroke-width="1.3" stroke-dasharray="1.1 0.7"/><circle cx="9.5" cy="8.6" r="1.5" fill="#444"/><circle cx="9.5" cy="8.6" r="0.5" fill="#f3f2f1"/></svg>
<div class="t" style="left:712.5px;top:406.0px;font-size:8.35px;color:#555">Display Settings</div>
<svg class="a" style="left:796px;top:403px" width="80" height="13"><rect x="1" y="1" width="10" height="10" fill="none" stroke="#aaa" stroke-width="1"/><path d="M4.3 1 L4.3 11 M7.7 1 L7.7 11 M1 4.3 L11 4.3 M1 7.7 L11 7.7" stroke="#aaa" stroke-width="1"/><rect x="33.5" y="1" width="11" height="10" fill="none" stroke="#aaa" stroke-width="1"/><rect x="36" y="2.5" width="6" height="7" fill="none" stroke="#aaa" stroke-width="0.8"/><rect x="65.5" y="1" width="11" height="10" fill="none" stroke="#aaa" stroke-width="1"/><path d="M65.5 7 L71.5 7 L71.5 1 M68.5 1 L68.5 7" stroke="#aaa" stroke-width="0.9" fill="none"/></svg>
<div class="a" style="left:887.5px;top:409.2px;width:6px;height:0.9px;background:#b8b8b8"></div>
<div class="a" style="left:898px;top:409px;width:80px;height:1px;background:#444"></div>
<div class="a" style="left:937.3px;top:406.2px;width:1.2px;height:6px;background:#555"></div>
<svg class="a" style="left:980px;top:404px" width="12" height="12"><path d="M5.5 1.5 L5.5 10 M1.5 5.8 L9.5 5.8" stroke="#bbb" stroke-width="1"/></svg>
<div class="t" style="left:998.6px;top:406.0px;font-size:8.3px;color:#b4b4b4">100%</div>
<div class="a" style="left:0px;top:0px;width:1024px;height:1.1px;background:#b65bf8"></div>
<div class="a" style="left:0px;top:0px;width:1.2px;height:417px;background:#b65bf8"></div>
<div class="a" style="left:1022.6px;top:0px;width:1.4px;height:417px;background:#b65bf8"></div>
<div class="a" style="left:0px;top:415.5px;width:1024px;height:1.5px;background:#b65bf8"></div>
</body></html>
